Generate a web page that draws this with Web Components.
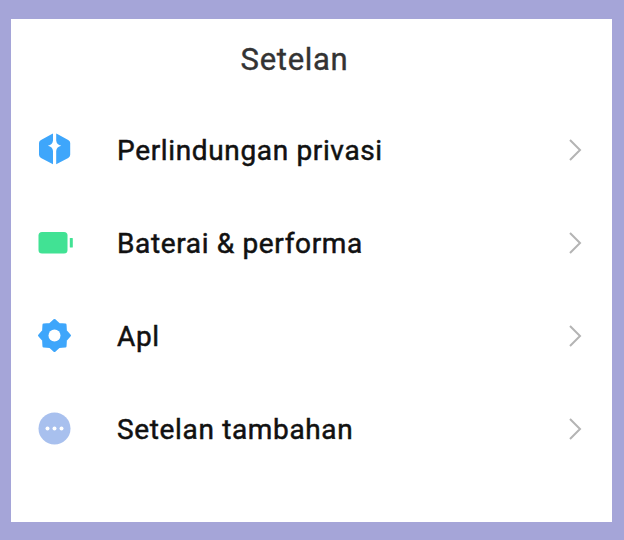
<!DOCTYPE html>
<html lang="id">
<head>
<meta charset="utf-8">
<title>Setelan</title>
<style>
html, body {
    margin: 0;
    padding: 0;
    background: #a5a5d8;
}
</style>
</head>
<body>
<settings-page>
    <settings-row label="Perlindungan privasi">
        <svg slot="icon" width="36" height="36" viewBox="0 0 36 36">
            <path fill="#3ea6fb" d="M16 1.4V8.6Q15.6 12.9 10.9 13.8 15.6 14.7 16 19V32.2L4 25.9Q2 24.8 2 22.7V11Q2 8.9 4 7.9L14 2.4Q15 1.8 16 1.4Z"/>
            <path fill="#3ea6fb" d="M19.2 1.4V8.6Q19.6 12.9 24.3 13.8 19.6 14.7 19.2 19V32.2L31.2 25.9Q33.2 24.8 33.2 22.7V11Q33.2 8.9 31.2 7.9L21.2 2.4Q20.2 1.8 19.2 1.4Z"/>
        </svg>
    </settings-row>
    <settings-row label="Baterai &amp; performa">
        <svg slot="icon" width="36" height="36" viewBox="0 0 36 36">
            <rect x="1.5" y="7" width="29" height="21.5" rx="3.5" fill="#41e294"/>
            <rect x="32.8" y="13" width="3" height="9.5" rx=".6" fill="#41e294"/>
        </svg>
    </settings-row>
    <settings-row label="Apl">
        <svg slot="icon" width="36" height="36" viewBox="0 0 36 36">
            <polygon fill="#3ea6fb" stroke="#3ea6fb" stroke-width="2.6" stroke-linejoin="round" points="17.5,2.3 22.09,6.41 28.25,6.75 28.59,12.91 32.7,17.5 28.59,22.09 28.25,28.25 22.09,28.59 17.5,32.7 12.91,28.59 6.75,28.25 6.41,22.09 2.3,17.5 6.41,12.91 6.75,6.75 12.91,6.41"/>
            <circle cx="17.5" cy="17.5" r="6" fill="#fff"/>
        </svg>
    </settings-row>
    <settings-row label="Setelan tambahan">
        <svg slot="icon" width="36" height="36" viewBox="0 0 36 36">
            <circle cx="17.5" cy="17.5" r="16" fill="#a8c0ee"/>
            <circle cx="10.5" cy="17.5" r="2" fill="#fff"/>
            <circle cx="17.5" cy="17.5" r="2" fill="#fff"/>
            <circle cx="24.5" cy="17.5" r="2" fill="#fff"/>
        </svg>
    </settings-row>
</settings-page>

<script>
const pageTemplate = document.createElement('template');
pageTemplate.innerHTML = `
<style>
:host {
    display: block;
    box-sizing: border-box;
    width: 624px;
    height: 540px;
    padding: 19px 12px 18px 11px;
    background: #a5a5d8;
    font-family: Roboto, "Liberation Sans", sans-serif;
}

.settings-page__card {
    height: 100%;
    background: #fff;
}

.settings-page__title {
    margin: 0;
    height: 80px;
    padding-right: 34px;
    line-height: 81px;
    text-align: center;
    font-size: 31px;
    font-weight: 400;
    -webkit-text-stroke: 0.4px #333;
    letter-spacing: 0.7px;
    color: #333;
}

.settings-page__list {
    display: flex;
    flex-direction: column;
    padding-top: 4px;
}
</style>
<section class="settings-page__card">
    <h1 class="settings-page__title">Setelan</h1>
    <div class="settings-page__list"><slot></slot></div>
</section>
`;

class SettingsPage extends HTMLElement {
    constructor() {
        super();

        this.attachShadow({ mode: 'open' });
        this.shadowRoot.appendChild(pageTemplate.content.cloneNode(true));
    }
}

const rowTemplate = document.createElement('template');
rowTemplate.innerHTML = `
<style>
:host {
    display: flex;
    align-items: center;
    height: 93px;
    padding: 0 30px 0 26px;
}

.settings-row__icon {
    display: flex;
    width: 36px;
    height: 36px;
    flex: none;
}

.settings-row__label {
    flex: 1;
    margin-left: 44px;
    padding-top: 1px;
    font-size: 28px;
    font-weight: 400;
    -webkit-text-stroke: 0.5px #111;
    letter-spacing: 0.65px;
    color: #111;
}

.settings-row__chevron {
    flex: none;
    display: block;
}
</style>
<span class="settings-row__icon"><slot name="icon"></slot></span>
<span class="settings-row__label"></span>
<svg class="settings-row__chevron" width="14" height="24" viewBox="0 0 14 24">
    <path d="M2 2l10 10L2 22" fill="none" stroke="#b4b4b4" stroke-width="2"/>
</svg>
`;

class SettingsRow extends HTMLElement {
    constructor() {
        super();

        this.attachShadow({ mode: 'open' });
        this.shadowRoot.appendChild(rowTemplate.content.cloneNode(true));
        this.shadowRoot.querySelector('.settings-row__label').textContent = this.getAttribute('label');
    }
}

customElements.define('settings-page', SettingsPage);
customElements.define('settings-row', SettingsRow);
</script>
</body>
</html>
